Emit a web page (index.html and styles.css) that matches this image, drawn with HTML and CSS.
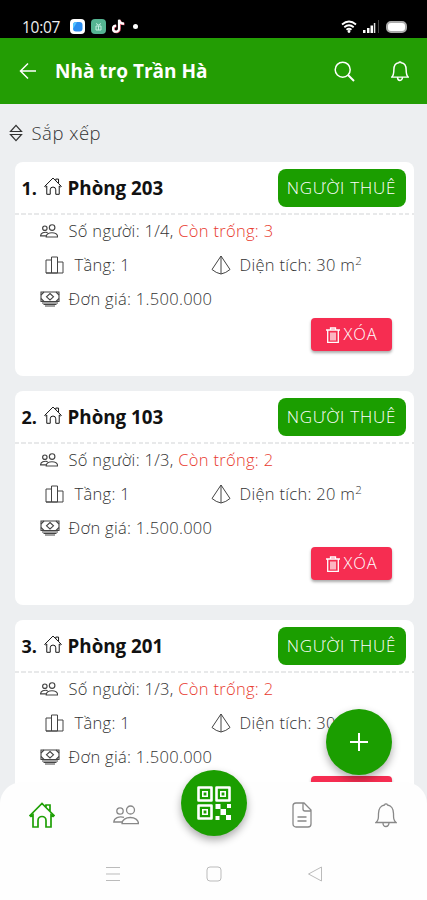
FILE: index.html
```html
<!DOCTYPE html>
<html lang="vi">
<head>
<meta charset="utf-8">
<title>Nhà trọ Trần Hà</title>
<link rel="stylesheet" href="styles.css">
</head>
<body>
<svg class="defs" aria-hidden="true">
  <symbol id="house" viewBox="0 0 26 26"><path d="M1 13.500 13 1.500l4 4V3h4v6.500l4 4-1 1-2-1.500V25h-5v-6.500a4 4 0 0 0-8 0V25H4V13l-2 1.500zM17 5.500l4 4"/></symbol>
  <symbol id="people" viewBox="0 0 26 20"><circle cx="17.500" cy="5" r="4"/><circle cx="7" cy="6" r="3.200"/><path d="M9 18.700c0-4 4-6.200 8.300-6.200s8.200 2.200 8.200 6.200zM11 12.300c-5-1.500-10 .7-10.200 4.700H9"/></symbol>
  <symbol id="floors" viewBox="0 0 20 18"><path d="M1 17V4h5.500v13zM6.500 17V1h6v16zM12.500 6H18v11H1"/></symbol>
  <symbol id="area" viewBox="0 0 20 20"><path d="M10 1 1 14.500Q5 18 10 19q5-1 9-4.500zM10 1v18"/></symbol>
  <symbol id="money" viewBox="0 0 20 16"><path d="M1 1h18v9.500H1z"/><path d="m10 2.500 3.500 3.300L10 9 6.500 5.800zM1 4 4 1M16 1l3 3M1 7.500l3 3M16 10.500l3-3M2 12h16M3.500 13.500h13M5 15h10"/></symbol>
  <symbol id="trash" viewBox="0 0 14 16"><path d="M0 3h14M4.500 2.500V1h5v1.500M1.700 3.500v12h10.600v-12M5 5.500v8M7 5.500v8M9 5.500v8"/></symbol>
  <symbol id="bell" viewBox="0 0 22 26"><path d="M1 20.500c2.500-2.500 2.500-4 2.500-9C3.500 7 6 3.500 9.500 3a1.600 1.600 0 0 1 3 0c3.500.5 6 4 6 8.500 0 5 0 6.500 2.500 9zM8 21a3 3.500 0 0 0 6 0"/></symbol>
</svg>
<main class="screen">
  <header class="status">
    <span class="time">10:07</span>
    <svg class="app" viewBox="0 0 15 15"><rect width="15" height="15" rx="4" fill="#fff"/><rect x="3" y="3" width="9.500" height="9.500" rx="3" fill="#2b8df0"/><path d="M3 10V6q0-3 4-3z" fill="#54c5ff"/></svg>
    <svg class="app" viewBox="0 0 15 15"><rect width="15" height="15" rx="4" fill="#55b492"/><path d="M5 4.500 7.500 6 10 4.500M5 7h5v4H5zM7.500 7v4" fill="none" stroke="#c4eee0"/></svg>
    <svg class="tiktok" viewBox="0 0 14 15"><path d="M7.500 1v9a3 3 0 1 1-3-3M7.500 1q.5 4 5 4" fill="none" stroke="#e85770" stroke-width="2.600"/><path d="M7 .7v9a3 3 0 1 1-3-3M7 .7q.5 4 5 4" fill="none" stroke="#fff" stroke-width="2.200"/></svg>
    <i class="dot"></i>
    <svg class="wifi" viewBox="0 0 16 13"><path d="M1 4.500q7-6 14 0M3.300 7.300q4.700-4 9.400 0M5.500 9.700q2.500-2 5 0" fill="none" stroke="#fff" stroke-width="1.800"/><circle cx="8" cy="11.500" r="1.400" fill="#fff"/></svg>
    <svg class="signal" viewBox="0 0 17 13"><path d="M0 10h2.500v3H0zM4 8h2.500v5H4zM7.500 5.500H10V13H7.500z" fill="#fff"/><path d="M10.800 3h1.500v10h-1.500z" fill="#ddd"/><path d="M15 0h1v13h-1z" fill="#444"/></svg>
    <i class="battery"></i>
  </header>
  <nav class="appbar">
    <svg class="back" viewBox="0 0 18 18"><path d="M17 9H1.500M9 1.500 1.500 9 9 16.500"/></svg>
    <h1>Nhà trọ Trần Hà</h1>
    <svg class="search" viewBox="0 0 21 21"><circle cx="8.700" cy="8.700" r="7.500"/><path d="m14 14 6 6" stroke-width="2"/></svg>
    <svg class="alert"><use href="#bell"/></svg>
  </nav>
  <section class="content">
    <div class="sort"><svg viewBox="0 0 14 18"><path d="M1.500 7.500 7 1.300l5.500 6.200zM1.500 10.500h11L7 16.700z"/></svg><span>Sắp xếp</span></div>

    <article class="card">
      <div class="head"><span class="num">1.</span><svg class="room"><use href="#house"/></svg><h2>Phòng 203</h2><button class="tenant">NGƯỜI THUÊ</button></div>
      <div class="row"><svg class="ic-people"><use href="#people"/></svg><span>Số người: 1/4, <em>Còn trống: 3</em></span></div>
      <div class="row split"><div class="cell"><svg class="ic-floor"><use href="#floors"/></svg><span>Tầng: 1</span></div><div class="cell"><svg class="ic-area"><use href="#area"/></svg><span>Diện tích: 30 m<sup>2</sup></span></div></div>
      <div class="row"><svg class="ic-money"><use href="#money"/></svg><span>Đơn giá: 1.500.000</span></div>
      <button class="delete"><svg><use href="#trash"/></svg><span>XÓA</span></button>
    </article>

    <article class="card">
      <div class="head"><span class="num">2.</span><svg class="room"><use href="#house"/></svg><h2>Phòng 103</h2><button class="tenant">NGƯỜI THUÊ</button></div>
      <div class="row"><svg class="ic-people"><use href="#people"/></svg><span>Số người: 1/3, <em>Còn trống: 2</em></span></div>
      <div class="row split"><div class="cell"><svg class="ic-floor"><use href="#floors"/></svg><span>Tầng: 1</span></div><div class="cell"><svg class="ic-area"><use href="#area"/></svg><span>Diện tích: 20 m<sup>2</sup></span></div></div>
      <div class="row"><svg class="ic-money"><use href="#money"/></svg><span>Đơn giá: 1.500.000</span></div>
      <button class="delete"><svg><use href="#trash"/></svg><span>XÓA</span></button>
    </article>

    <article class="card">
      <div class="head"><span class="num">3.</span><svg class="room"><use href="#house"/></svg><h2>Phòng 201</h2><button class="tenant">NGƯỜI THUÊ</button></div>
      <div class="row"><svg class="ic-people"><use href="#people"/></svg><span>Số người: 1/3, <em>Còn trống: 2</em></span></div>
      <div class="row split"><div class="cell"><svg class="ic-floor"><use href="#floors"/></svg><span>Tầng: 1</span></div><div class="cell"><svg class="ic-area"><use href="#area"/></svg><span>Diện tích: 30</span></div></div>
      <div class="row"><svg class="ic-money"><use href="#money"/></svg><span>Đơn giá: 1.500.000</span></div>
      <button class="delete" aria-label="Xóa"></button>
    </article>
  </section>
  <button class="fab" aria-label="Thêm"><svg viewBox="0 0 18 18"><path d="M9 0v18M0 9h18"/></svg></button>
  <footer class="bottom">
    <div class="tabs">
      <svg class="tab home"><use href="#house"/></svg>
      <svg class="tab group"><use href="#people"/></svg>
      <button class="qr" aria-label="QR"><svg viewBox="0 0 35 35"><path d="M1.500 1.500h13v13h-13zM19.500 1.500h13v13h-13zM1.500 19.500h13v13h-13z" fill="none" stroke="#fff" stroke-width="2.600" stroke-linejoin="round"/><path d="M5.800 5.800h4.400v4.400H5.800zM23.800 5.800h4.400v4.400h-4.400zM5.800 23.800h4.400v4.400H5.800z" fill="none" stroke="#fff" stroke-width="1.600"/><path d="M18.500 18h5v5h-5zM30 18h4v4h-4zM23.500 23h5.500v6h-5.500zM18.500 30h4v4h-4zM29 29h5v5h-5z" fill="#fff"/></svg></button>
      <svg class="tab doc" viewBox="0 0 20 26"><path d="M4 1h8l7 7v14a3 3 0 0 1-3 3H4a3 3 0 0 1-3-3V4a3 3 0 0 1 3-3zM11 1v6a2 2 0 0 0 2 2h6M5.500 15h9M5.500 19h9"/></svg>
      <svg class="tab bell"><use href="#bell"/></svg>
    </div>
    <div class="system">
      <svg viewBox="0 0 16 16"><path d="M1 1.500h14M1 8h14M1 14.500h14"/></svg>
      <svg viewBox="0 0 16 16"><rect x="1" y="1" width="14" height="14" rx="3"/></svg>
      <svg viewBox="0 0 16 16"><path d="M14.500 1v14L1.500 8z"/></svg>
    </div>
  </footer>
</main>
</body>
</html>
```
FILE: styles.css
```css
* { box-sizing: border-box; }
body { margin: 0; font-family: "Open Sans", sans-serif; color: #555; }
h1, h2 { margin: 0; }
button { border: 0; padding: 0; font: inherit; }
svg { flex: none; fill: none; stroke: currentColor; }
em { font-style: normal; color: #e8392e; }
.defs { position: absolute; width: 0; height: 0; }
.screen { position: relative; width: 427px; height: 900px; overflow: hidden; background: #edeff1; }

.status { height: 38px; padding: 15px 20px 0 22px; background: #000; display: flex; align-items: center; color: #eee; }
.status svg { stroke: none; }
.time { width: 38px; margin-right: 10px; font-size: 15.500px; line-height: 22px; letter-spacing: -.3px; white-space: nowrap; }
.app { width: 15px; height: 15px; margin-right: 6px; }
.tiktok { width: 14px; height: 15px; margin-right: 7px; }
.dot { width: 5px; height: 5px; border-radius: 50%; background: #fff; }
.wifi { width: 16px; height: 13px; margin-left: auto; }
.signal { width: 17px; height: 13px; margin: 0 6px; }
.battery { width: 21px; height: 12px; border: 2px solid #aaa; border-radius: 5px; background: #fff; }

.appbar { height: 66px; padding: 0 18px 0 19px; background: #239d04; color: #fff; display: flex; align-items: center; }
.back { width: 18px; height: 18px; margin-right: 18px; stroke-width: 1.500; }
.appbar h1 { font-size: 19px; line-height: 24px; font-weight: 700; white-space: nowrap; }
.search { width: 21px; height: 21px; margin-left: auto; stroke-width: 1.500; }
.alert { width: 18px; height: 22px; margin-left: 36px; stroke-width: 1.800; }

.content { padding: 0 13.500px 0 14.500px; }
.sort { height: 58px; margin-left: -6px; display: flex; align-items: center; gap: 9px; font-size: 18.500px; font-weight: 300; letter-spacing: .5px; color: #333; }
.sort span { margin-top: -2px; }
.sort svg { width: 14px; height: 18px; stroke-width: 1.200; }
.card { height: 214px; margin-bottom: 15px; background: #fff; border-radius: 8px; }
.head { height: 53px; margin-bottom: -1px; padding: 0 8px 2px 7px; background: repeating-linear-gradient(90deg, #e8e9ea 0 4px, #fff 4px 6.500px) bottom / 100% 2px no-repeat; display: flex; align-items: center; color: #111; }
.num { width: 22px; font-size: 18px; font-weight: 700; }
.room { width: 18px; height: 18px; margin: -4px 6px 0 0; stroke-width: 1.400; }
.head h2 { font-size: 18.800px; font-weight: 700; white-space: nowrap; }
.tenant { width: 128px; height: 38px; margin: 1px 0 0 auto; padding-bottom: 2px; border-radius: 8px; background: #1b9e00; color: #fff; font-size: 17px; font-weight: 300; letter-spacing: .8px; white-space: nowrap; }
.row { height: 34px; padding-left: 25px; display: flex; align-items: center; font-size: 16.500px; font-weight: 300; letter-spacing: .3px; line-height: 24px; white-space: nowrap; color: #333; }
.row svg { color: #444; }
.cell { display: flex; align-items: center; }
.split { padding-left: 30px; }
.split .cell:first-child { width: 166px; }
.ic-people { width: 18px; height: 14px; margin-right: 11px; stroke-width: 1.700; }
.ic-floor { width: 20px; height: 18px; margin-right: 10px; }
.ic-area { width: 20px; height: 20px; margin-right: 9px; }
.ic-money { width: 20px; height: 16px; margin-right: 9px; stroke-width: 1.100; }
sup { font-size: 11.500px; line-height: 0; vertical-align: 6px; }
.delete { width: 81px; height: 33px; margin: 2px 21.500px 0 auto; border-radius: 4px; background: #f62d51; color: #fff; box-shadow: 0 2px 3px #0005; display: flex; align-items: center; justify-content: center; gap: 4px; font-size: 16.500px; font-weight: 300; letter-spacing: .8px; }
.delete svg { width: 14px; height: 16px; stroke-width: 1.300; }
.delete span { margin-top: -2px; }

.fab, .qr { width: 66px; height: 66px; border-radius: 50%; background: #1b9e00; color: #fff; display: flex; align-items: center; justify-content: center; box-shadow: 0 4px 8px #0005; }
.fab { position: absolute; left: 326px; top: 709px; }
.fab svg { width: 18px; height: 18px; stroke-width: 2; }
.bottom { position: absolute; left: 0; right: 0; bottom: 0; height: 118px; background: #fefefe; border-radius: 22px 22px 0 0; color: #888; }
.tabs { height: 66px; padding: 0 30px 0 29px; display: flex; align-items: center; }
.tab { stroke-width: 1.300; }
.home { width: 26px; height: 26px; color: #1fa006; margin-right: 58px; stroke-width: 1.700; }
.group { width: 26px; height: 20px; margin: 0 42px 0 0; }
.qr { margin: -24px 45px 0 0; }
.qr svg { width: 35px; height: 35px; stroke: none; }
.doc { width: 20px; height: 26px; }
.bell { width: 22px; height: 26px; margin-left: auto; }
.system { display: flex; justify-content: center; gap: 85px; padding-top: 18px; color: #bbb; }
.system svg { width: 16px; height: 16px; }
```
